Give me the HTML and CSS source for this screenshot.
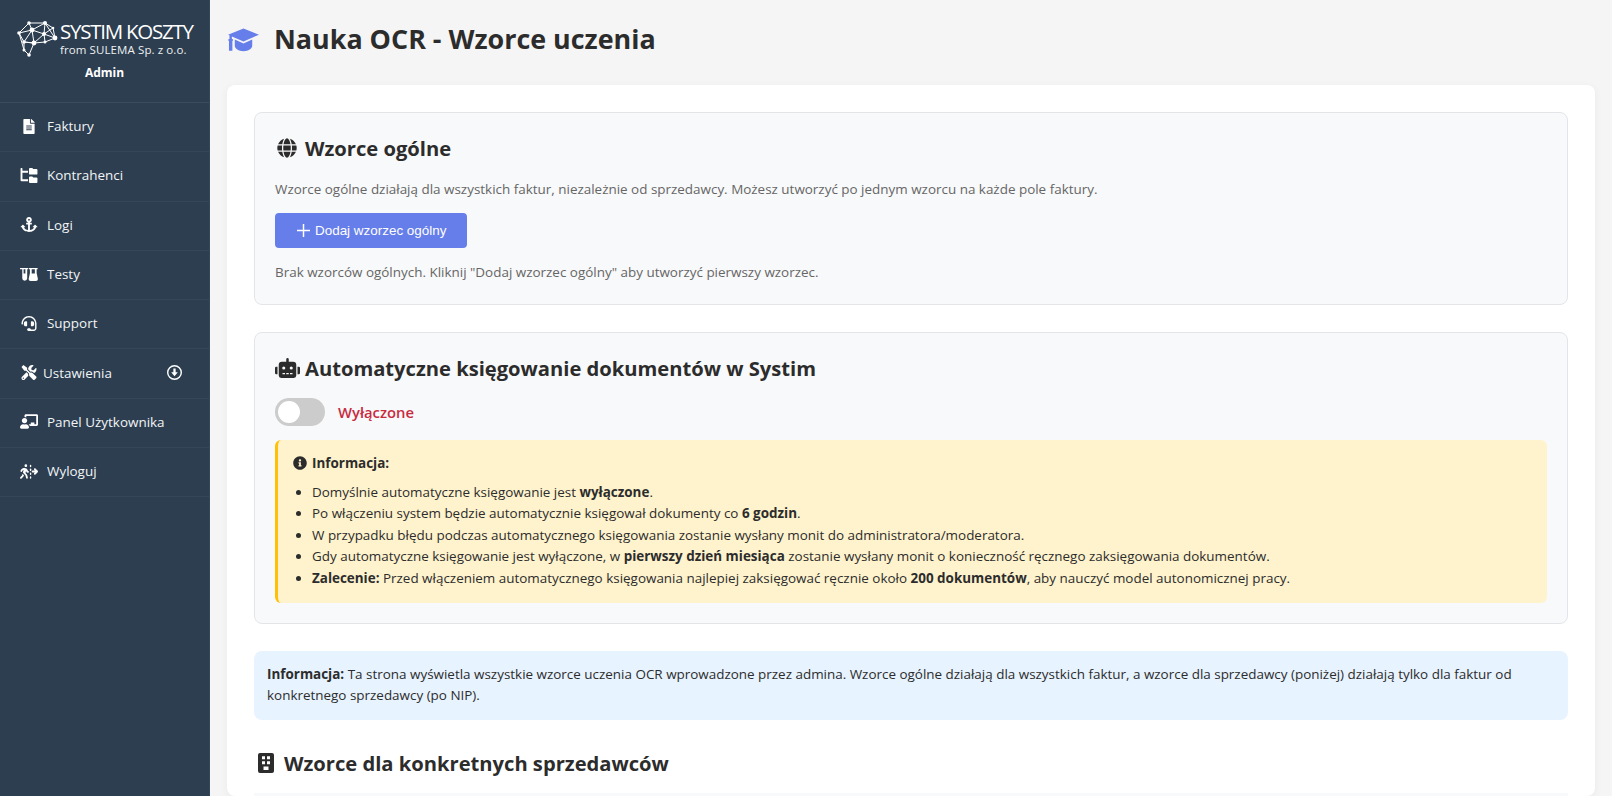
FILE: index.html
```html
<!DOCTYPE html>
<html lang="pl">
<head>
<meta charset="utf-8">
<title>Nauka OCR</title>
<link rel="stylesheet" href="styles.css">
</head>
<body>
<aside class="sidebar">
  <div class="brand">
    <div class="logo">
      <svg class="brain" viewBox="0 0 42 36" fill="none" stroke="#fff" stroke-width="1">
        <path d="M3 12 13 2 29 2 37 7 39 17 29 21 18 22 8 21 3 12M13 2 16 9 28 13 39 17M29 2 16 9 3 12M29 2 28 13 18 22M29 2 39 17M16 9 8 21M16 9 18 22M28 13 29 21M8 21 18 22 13 34 8 29 8 21M3 12 8 29M37 7 28 13"/>
        <g fill="#fff" stroke="none"><circle cx="3" cy="12" r="1.800"/><circle cx="13" cy="2" r="1.800"/><circle cx="29" cy="2" r="2"/><circle cx="37" cy="7" r="1.300"/><circle cx="39" cy="17" r="2.400"/><circle cx="28" cy="13" r="2"/><circle cx="16" cy="9" r="2.400"/><circle cx="18" cy="22" r="2.400"/><circle cx="8" cy="21" r="1.800"/><circle cx="29" cy="21" r="1.500"/><circle cx="13" cy="34" r="1.800"/><circle cx="8" cy="29" r="1.500"/></g>
      </svg>
      <div class="logo-text"><span class="logo-main">SYSTIM KOSZTY</span><span class="logo-sub">from SULEMA Sp. z o.o.</span></div>
    </div>
    <div class="user">Admin</div>
  </div>
  <nav class="menu">
    <a class="item"><svg class="ico" viewBox="0 0 384 512"><path d="M224 136V0H24C10.700 0 0 10.700 0 24v464c0 13.300 10.700 24 24 24h336c13.300 0 24-10.700 24-24V160H248c-13.200 0-24-10.800-24-24zm64 236c0 6.600-5.400 12-12 12H108c-6.600 0-12-5.400-12-12v-8c0-6.600 5.400-12 12-12h168c6.600 0 12 5.400 12 12v8zm0-64c0 6.600-5.400 12-12 12H108c-6.600 0-12-5.400-12-12v-8c0-6.600 5.400-12 12-12h168c6.600 0 12 5.400 12 12v8zm0-72v8c0 6.600-5.400 12-12 12H108c-6.600 0-12-5.400-12-12v-8c0-6.600 5.400-12 12-12h168c6.600 0 12 5.400 12 12zm96-114.100v6.100H256V0h6.100c6.400 0 12.500 2.500 17 7l97.900 98c4.500 4.500 7 10.600 7 16.900z"/></svg><span>Faktury</span></a>
    <a class="item"><svg class="ico" viewBox="0 0 576 512"><path d="M544 32H432L400 0h-80a32 32 0 0 0-32 32v160a32 32 0 0 0 32 32h224a32 32 0 0 0 32-32V64a32 32 0 0 0-32-32zm0 288H432l-32-32h-80a32 32 0 0 0-32 32v160a32 32 0 0 0 32 32h224a32 32 0 0 0 32-32V352a32 32 0 0 0-32-32zM64 16A16 16 0 0 0 48 0H16A16 16 0 0 0 0 16v400a32 32 0 0 0 32 32h224v-64H64V160h192V96H64z"/></svg><span>Kontrahenci</span></a>
    <a class="item"><svg class="ico" viewBox="0 0 576 512"><path d="M12.971 352h32.394C67.172 454.735 181.944 512 288 512c106.229 0 220.853-57.380 242.635-160h32.394c10.691 0 16.045-12.926 8.485-20.485l-67.029-67.029c-4.686-4.686-12.284-4.686-16.971 0l-67.029 67.029c-7.560 7.560-2.206 20.485 8.485 20.485h35.146c-20.290 54.317-84.963 86.588-144.117 94.015V256h52c6.627 0 12-5.373 12-12v-40c0-6.627-5.373-12-12-12h-52v-5.470c37.281-13.178 63.995-48.725 64-90.518C384.005 43.772 341.605.738 289.370.010 235.723-.739 192 42.525 192 96c0 41.798 26.716 77.350 64 90.530V192h-52c-6.627 0-12 5.373-12 12v40c0 6.627 5.373 12 12 12h52v190.015c-58.936-7.399-123.820-39.679-144.117-94.015h35.146c10.691 0 16.045-12.926 8.485-20.485l-67.029-67.029c-4.686-4.686-12.284-4.686-16.971 0L4.485 331.515C-3.074 339.074 2.280 352 12.971 352zM288 64c17.645 0 32 14.355 32 32s-14.355 32-32 32-32-14.355-32-32 14.355-32 32-32z"/></svg><span>Logi</span></a>
    <a class="item"><svg class="ico" viewBox="0 0 640 512"><path d="M16 24h256a16 16 0 0 1 0 48h-16v320a88 88 0 0 1-176 0V72H16a16 16 0 0 1 0-48zm112 48v150h64V72z"/><path fill-rule="evenodd" d="M336 24h272a16 16 0 0 1 0 48h-16v140l42 190c8 42-20 86-66 86H376c-46 0-74-44-66-86l42-190V72h-16a16 16 0 0 1 0-48zm80 48v150h112V72z"/></svg><span>Testy</span></a>
    <a class="item"><svg class="ico" viewBox="0 0 512 512"><path d="M192 208c0-17.670-14.330-32-32-32h-16c-35.350 0-64 28.650-64 64v48c0 35.350 28.650 64 64 64h16c17.670 0 32-14.330 32-32V208zm176 144c35.350 0 64-28.650 64-64v-48c0-35.350-28.650-64-64-64h-16c-17.670 0-32 14.330-32 32v112c0 17.670 14.330 32 32 32h16zM256 0C113.180 0 4.580 118.830 0 256v16c0 8.840 7.160 16 16 16h16c8.840 0 16-7.160 16-16v-16c0-114.690 93.310-208 208-208s208 93.310 208 208h-.12c.08 2.430.12 165.720.12 165.720 0 23.350-18.930 42.280-42.280 42.280H320c0-26.510-21.490-48-48-48h-32c-26.510 0-48 21.490-48 48s21.490 48 48 48h181.720c49.860 0 90.280-40.420 90.280-90.280V256C507.420 118.830 398.820 0 256 0z"/></svg><span>Support</span></a>
    <a class="item item-sub"><svg class="ico" viewBox="0 0 512 512"><path d="M501.100 395.700L384 278.600c-23.100-23.100-57.600-27.600-85.400-13.900L192 158.100V96L64 0 0 64l96 128h62.100l106.600 106.600c-13.600 27.800-9.200 62.300 13.900 85.400l117.100 117.100c14.600 14.600 38.200 14.600 52.700 0l52.700-52.700c14.500-14.600 14.500-38.200 0-52.700zM331.700 225c28.300 0 54.900 11 74.900 31l19.400 19.400c15.800-6.900 30.800-16.500 43.800-29.500 37.100-37.100 49.700-89.300 37.900-136.700-2.200-9-13.500-12.100-20.100-5.500l-74.400 74.400-67.900-11.300L334 98.900l74.400-74.400c6.600-6.600 3.400-17.900-5.700-20.200-47.400-11.700-99.600.9-136.600 37.900-28.500 28.500-41.900 66.100-41.200 103.600l82.100 82.100c8.100-1.900 16.500-2.900 24.700-2.900zm-103.900 82l-56.700-56.700L18.700 402.800c-25 25-25 65.500 0 90.500s65.500 25 90.500 0l123.600-123.600c-7.600-19.900-9.900-41.600-5-62.700zM64 472c-13.200 0-24-10.800-24-24 0-13.300 10.700-24 24-24s24 10.700 24 24c0 13.200-10.700 24-24 24z"/></svg><span>Ustawienia</span><svg class="chev" viewBox="0 0 16 16"><path fill-rule="evenodd" d="M8 0a8 8 0 1 1 0 16A8 8 0 0 1 8 0zm0 1.500a6.500 6.500 0 1 0 0 13 6.500 6.500 0 0 0 0-13zM6.800 3.800h2.400v4h2.300L8 12 4.500 7.800h2.300z"/></svg></a>
    <a class="item"><svg class="ico" viewBox="0 0 640 512"><path d="M208 352c-2.390 0-4.780.35-7.060 1.090C187.980 357.300 174.350 360 160 360c-14.350 0-27.980-2.700-40.950-6.910-2.280-.74-4.660-1.090-7.050-1.090C49.940 352-.33 402.480 0 464.620.14 490.880 21.730 512 48 512h224c26.270 0 47.860-21.120 48-47.380.33-62.140-49.940-112.620-112-112.620zm-48-32c53.020 0 96-42.980 96-96s-42.980-96-96-96-96 42.980-96 96 42.980 96 96 96zM592 0H208c-26.470 0-48 22.250-48 49.590V96c23.420 0 45.100 6.780 64 17.800V64h352v288h-64v-64H384v64h-76.240c19.100 16.690 33.120 38.730 39.690 64H592c26.470 0 48-22.250 48-49.590V49.590C640 22.250 618.470 0 592 0z"/></svg><span>Panel Użytkownika</span></a>
    <a class="item"><svg class="ico" viewBox="0 0 640 512"><path d="M208 96a48 48 0 1 0 0-96 48 48 0 1 0 0 96zM123.700 200.500c1-.4 1.900-.8 2.900-1.200l-16.900 63.500c-5.600 21.100-.1 43.600 14.700 59.700l70.700 77.100 22 88.100c4.300 17.100 21.700 27.600 38.800 23.300s27.600-21.700 23.300-38.800l-23-92.100c-1.900-7.800-5.800-14.900-11.200-20.800l-49.500-54 19.300-65.500 9.600 23c4.400 10.600 12.500 19.300 22.800 24.500l26.700 13.300c15.800 7.900 35 1.500 42.900-14.300s1.500-35-14.300-42.900L281 232.700l-15.300-36.800C248.500 154.800 208.300 128 163.700 128c-22.800 0-45.300 4.800-66.100 14l-8 3.500c-32.900 14.600-58.100 42.400-69.400 76.500l-2.600 7.800c-5.600 16.800 3.500 34.900 20.200 40.500s34.900-3.500 40.500-20.200l2.600-7.800c5.700-17.100 18.300-30.900 34.700-38.200l8-3.500zm-30 135.100l-25 62.400-59.400 59.300c-12.500 12.500-12.500 32.800 0 45.300s32.800 12.500 45.300 0L115.300 441c4.600-4.600 8.200-10.100 10.600-16.100l14.500-36.200-40.700-44.400c-2.500-2.700-4.800-5.600-7-8.600zM550.600 153.400c-12.500-12.500-32.800-12.500-45.300 0s-12.500 32.800 0 45.300L530.700 224H448c-17.700 0-32 14.300-32 32s14.300 32 32 32h82.700l-25.400 25.400c-12.500 12.500-12.500 32.800 0 45.300s32.800 12.500 45.300 0l80-80c12.500-12.500 12.500-32.800 0-45.300l-80-80z"/><rect x="352" y="16" width="48" height="88" rx="24"/><rect x="352" y="152" width="48" height="88" rx="24"/><rect x="352" y="288" width="48" height="88" rx="24"/><rect x="352" y="424" width="48" height="88" rx="24"/></svg><span>Wyloguj</span></a>
  </nav>
</aside>
<main class="content">
  <header class="page-head">
    <svg class="cap" viewBox="0 0 32 24"><path d="M16 0 32 6.500 16 13.500 4 8.300V11a1 1 0 0 1 .5 2v10H1V13a1 1 0 0 1 .5-2V7.200L0 6.500z"/><path d="M7 11.500 16 15.500 25 11.500V18c0 3-4 5.500-9 5.500S7 21 7 18z"/></svg>
    <h1>Nauka OCR - Wzorce uczenia</h1>
  </header>
  <div class="panel">
    <section class="box box-general">
      <h2><svg class="h-ico" viewBox="0 0 496 512"><path d="M336.500 160C322 70.700 287.800 8 248 8s-74 62.700-88.500 152h177zM152 256c0 22.200 1.200 43.500 3.300 64h185.300c2.100-20.500 3.300-41.800 3.300-64s-1.200-43.500-3.300-64H155.300c-2.100 20.500-3.300 41.800-3.300 64zm324.700-96c-28.600-67.900-86.500-120.400-158-141.600 24.400 33.800 41.200 84.700 50 141.600h108zM177.200 18.400C105.800 39.600 47.800 92.100 19.300 160h108c8.700-56.900 25.500-107.800 49.900-141.600zM487.400 192H372.700c2.100 21 3.300 42.500 3.300 64s-1.200 43-3.300 64h114.600c5.500-20.500 8.600-41.800 8.600-64s-3.100-43.500-8.500-64zM120 256c0-21.500 1.200-43 3.300-64H8.600C3.200 212.500 0 233.800 0 256s3.200 43.500 8.600 64h114.600c-2-21-3.200-42.500-3.200-64zm39.500 96c14.500 89.300 48.700 152 88.500 152s74-62.700 88.500-152h-177zm159.300 141.600c71.400-21.200 129.400-73.700 158-141.600h-108c-8.800 56.900-25.600 107.800-50 141.600zM19.300 352c28.600 67.900 86.500 120.400 158 141.600-24.400-33.800-41.200-84.700-50-141.600h-108z"/></svg>Wzorce ogólne</h2>
      <p class="muted">Wzorce ogólne działają dla wszystkich faktur, niezależnie od sprzedawcy. Możesz utworzyć po jednym wzorcu na każde pole faktury.</p>
      <button class="btn"><svg class="plus" viewBox="0 0 14 14"><path d="M6.200 0h1.600v6.200H14v1.600H7.800V14H6.200V7.800H0V6.200h6.200z"/></svg>Dodaj wzorzec ogólny</button>
      <p class="muted last">Brak wzorców ogólnych. Kliknij "Dodaj wzorzec ogólny" aby utworzyć pierwszy wzorzec.</p>
    </section>
    <section class="box box-auto">
      <h2><svg class="h-ico robot" viewBox="0 0 640 512"><path d="M32 224H64V416H32A31.960 31.960 0 0 1 0 384V256A31.960 31.960 0 0 1 32 224Zm512-48V448a64.060 64.060 0 0 1-64 64H160a64.060 64.060 0 0 1-64-64V176a79.974 79.974 0 0 1 80-80H288V32a32 32 0 0 1 64 0V96H464A79.974 79.974 0 0 1 544 176ZM264 256a40 40 0 1 0-40 40A39.997 39.997 0 0 0 264 256Zm-8 128H192v32h64Zm96 0H288v32h64ZM456 256a40 40 0 1 0-40 40A39.997 39.997 0 0 0 456 256Zm-8 128H384v32h64ZM640 256V384a31.960 31.960 0 0 1-32 32H576V224h32A31.960 31.960 0 0 1 640 256Z"/></svg>Automatyczne księgowanie dokumentów w Systim</h2>
      <div class="toggle-row"><span class="toggle"><span class="knob"></span></span><span class="off">Wyłączone</span></div>
      <div class="warn">
        <div class="warn-title"><svg class="i-ico" viewBox="0 0 512 512"><path d="M256 8C119.043 8 8 119.083 8 256c0 136.997 111.043 248 248 248s248-111.003 248-248C504 119.083 392.957 8 256 8zm0 110c23.196 0 42 18.804 42 42s-18.804 42-42 42-42-18.804-42-42 18.804-42 42-42zm56 254c0 6.627-5.373 12-12 12h-88c-6.627 0-12-5.373-12-12v-24c0-6.627 5.373-12 12-12h12v-64h-12c-6.627 0-12-5.373-12-12v-24c0-6.627 5.373-12 12-12h64c6.627 0 12 5.373 12 12v100h12c6.627 0 12 5.373 12 12v24z"/></svg><strong>Informacja:</strong></div>
        <ul>
          <li>Domyślnie automatyczne księgowanie jest <strong>wyłączone</strong>.</li>
          <li>Po włączeniu system będzie automatycznie księgował dokumenty co <strong>6 godzin</strong>.</li>
          <li>W przypadku błędu podczas automatycznego księgowania zostanie wysłany monit do administratora/moderatora.</li>
          <li>Gdy automatyczne księgowanie jest wyłączone, w <strong>pierwszy dzień miesiąca</strong> zostanie wysłany monit o konieczność ręcznego zaksięgowania dokumentów.</li>
          <li><strong>Zalecenie:</strong> Przed włączeniem automatycznego księgowania najlepiej zaksięgować ręcznie około <strong>200 dokumentów</strong>, aby nauczyć model autonomicznej pracy.</li>
        </ul>
      </div>
    </section>
    <div class="info"><strong>Informacja:</strong> Ta strona wyświetla wszystkie wzorce uczenia OCR wprowadzone przez admina. Wzorce ogólne działają dla wszystkich faktur, a wzorce dla sprzedawcy (poniżej) działają tylko dla faktur od konkretnego sprzedawcy (po NIP).</div>
    <h2 class="seller"><svg class="b-ico" viewBox="0 0 16 20"><path fill-rule="evenodd" d="M2 0h12a2 2 0 0 1 2 2v16a2 2 0 0 1-2 2H2a2 2 0 0 1-2-2V2a2 2 0 0 1 2-2zm2 3.200v3h3v-3zm5 0v3h3v-3zm-5 5v3h3v-3zm5 0v3h3v-3zM5.500 13.500V17h5v-3.500z"/></svg>Wzorce dla konkretnych sprzedawców</h2>
    <div class="table-top"></div>
  </div>
</main>
</body>
</html>
```
FILE: styles.css
```css
* { box-sizing: border-box; }
html, body { height: 100%; }
body {
  margin: 0;
  height: 796px;
  overflow: hidden;
  display: flex;
  font-family: "Open Sans", sans-serif;
  font-size: 13.440px;
  color: #2c2c2c;
  background: #f5f5f5;
}
.sidebar {
  flex: 0 0 210px;
  background: #2c3e50;
  color: #fff;
  border-right: 1px solid #33475b;
}
.brand {
  height: 103px;
  padding-top: 21px;
  border-bottom: 1px solid #3a4d60;
}
.logo { display: flex; align-items: flex-start; padding-left: 16px; }
.brain { width: 42px; height: 36px; flex: none; }
.logo-text { display: flex; flex-direction: column; margin-left: 2px; }
.logo-main { font-size: 20.500px; line-height: 21px; letter-spacing: -1.250px; white-space: nowrap; }
.logo-sub { font-size: 11.500px; line-height: 14px; color: #eef0f2; letter-spacing: .100px; white-space: nowrap; font-weight: 500; margin-top: 1px; }
.user { margin-top: 8px; text-align: center; font-size: 12px; font-weight: 700; line-height: 16px; }
.menu { display: flex; flex-direction: column; }
.item {
  height: 49.300px;
  display: flex;
  align-items: center;
  padding: 0 0 2px 20px;
  border-bottom: 1px solid #34475a;
  font-size: 13.440px;
  color: #f2f4f6;
}
.ico { width: 18px; height: 15px; fill: #fff; flex: none; margin-right: 9px; }
.item-sub .ico { margin-right: 5px; }
.chev { width: 15px; height: 15px; fill: #fff; margin-left: auto; margin-right: 27px; }
.content { flex: 1; min-width: 0; padding: 0 17px; }
.page-head { height: 85px; display: flex; align-items: center; }
.cap { width: 31px; height: 24px; fill: #667eea; flex: none; margin: -5px 15px 0 1px; }
h1 { margin: -8px 0 0; font-size: 26.880px; font-weight: 700; line-height: 36px; color: #2c2c2c; }
.panel {
  background: #fff;
  border-radius: 8px;
  padding: 27px 27px 0;
  height: 711px;
  box-shadow: 0 2px 8px rgba(0, 0, 0, .05);
}
.box {
  background: #f8f9fa;
  border: 1px solid #e3e5e8;
  border-radius: 8px;
  padding: 20px;
  margin-bottom: 27px;
}
.box-general { height: 193px; }
.box-auto { height: 292px; }
h2 {
  margin: 0;
  padding-bottom: 2px;
  display: flex;
  align-items: center;
  font-size: 20.160px;
  font-weight: 700;
  line-height: 30px;
  color: #2c2c2c;
}
.h-ico { width: 20px; height: 20px; fill: #2c2c2c; margin-right: 8px; flex: none; margin-left: 2px; }
.h-ico.robot { width: 25px; margin: 0 5px 0 0; }
.muted { margin: 0; color: #666; line-height: 20px; }
.box-general .muted { margin-top: 14px; }
.btn {
  display: flex;
  align-items: center;
  margin-top: 14px;
  width: 192px;
  height: 35px;
  padding: 0 0 0 22px;
  border: 0;
  border-radius: 4px;
  background: #667eea;
  color: #fff;
  font-family: "Liberation Sans", sans-serif;
  font-size: 13.440px;
}
.plus { width: 13px; height: 13px; fill: #fff; margin-right: 5px; }
.box-general .last { margin-top: 14px; }
.toggle-row { display: flex; align-items: center; margin-top: 13px; }
.toggle { width: 50px; height: 28px; border-radius: 14px; background: #ccc; padding: 3px; display: block; margin-right: 13px; }
.knob { display: block; width: 22px; height: 22px; border-radius: 50%; background: #fff; }
.off { color: #c82b3f; font-size: 14.800px; font-weight: 600; }
.warn {
  margin-top: 14px;
  height: 163px;
  background: #fff3cd;
  border-left: 3px solid #ffc107;
  border-radius: 6px;
  padding: 12px 15px;
}
.warn-title { display: flex; align-items: center; line-height: 22px; }
.i-ico { width: 14px; height: 14px; fill: #2c2c2c; margin-right: 5px; flex: none; }
.warn strong { font-weight: 700; }
ul { margin: 8px 0 0; padding: 0 0 0 19px; line-height: 21.400px; }
.info {
  height: 69px;
  background: #e7f3ff;
  border-radius: 8px;
  padding: 13px;
  line-height: 21px;
}
.seller { margin-top: 28px; }
.b-ico { width: 16px; height: 20px; fill: #2c2c2c; margin: 0 10px 0 4px; flex: none; }
.table-top { height: 20px; margin-top: 13px; background: #f8f9fa; }
```
